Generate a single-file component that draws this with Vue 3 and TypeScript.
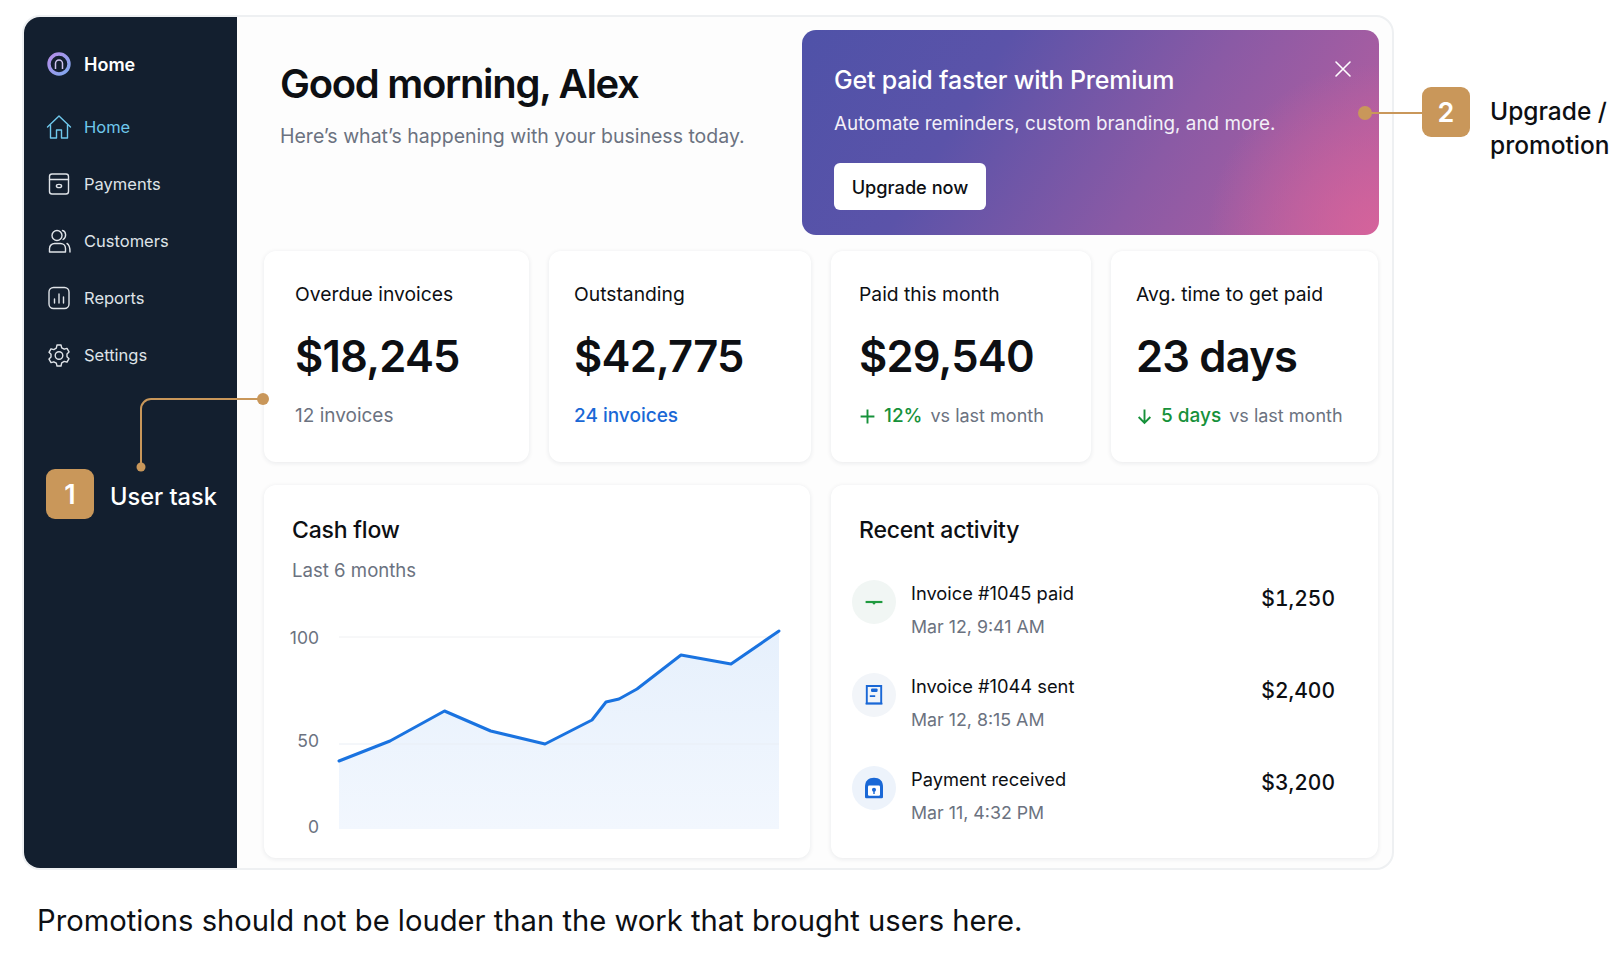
<script setup lang="ts">
const nav = [
  { label: 'Home', icon: 'home', active: true },
  { label: 'Payments', icon: 'payments' },
  { label: 'Customers', icon: 'customers' },
  { label: 'Reports', icon: 'reports' },
  { label: 'Settings', icon: 'settings' },
]

const stats = [
  { label: 'Overdue invoices', value: '$18,245', sub: '12 invoices', tone: 'muted' },
  { label: 'Outstanding', value: '$42,775', sub: '24 invoices', tone: 'link' },
  { label: 'Paid this month', value: '$29,540', delta: '12%', arrow: 'plus', sub: 'vs last month', tone: 'muted' },
  { label: 'Avg. time to get paid', value: '23 days', delta: '5 days', arrow: 'down', sub: 'vs last month', tone: 'muted' },
]

const activity = [
  { title: 'Invoice #1045 paid', date: 'Mar 12, 9:41 AM', amount: '$1,250', icon: 'paid' },
  { title: 'Invoice #1044 sent', date: 'Mar 12, 8:15 AM', amount: '$2,400', icon: 'sent' },
  { title: 'Payment received', date: 'Mar 11, 4:32 PM', amount: '$3,200', icon: 'received' },
]

const points: [number, number][] = [
  [58, 157], [109, 137], [163.5, 107], [209.7, 127], [264, 140], [311, 116],
  [325, 98], [338, 95], [356, 85], [400, 51], [450, 60], [498, 27],
]
const line = points.map((p) => p.join(',')).join(' ')
const area = `58,225 ${line} 498,225`
</script>

<template>
  <div class="page">
    <div class="frame">
      <aside class="sidebar">
        <div class="brand">
          <svg class="nav-icon" viewBox="0 0 26 26" fill="none">
            <defs>
              <linearGradient id="ring" x1="0" y1="0" x2="1" y2="1">
                <stop offset="0" stop-color="#b58de8" />
                <stop offset="1" stop-color="#7fa8ee" />
              </linearGradient>
            </defs>
            <circle cx="13" cy="13" r="10" stroke="url(#ring)" stroke-width="3.400" />
            <path d="M9.500 18v-5.500a3.500 3.500 0 0 1 7 0V18" stroke="#cfc4ee" stroke-width="1.500" />
          </svg>
          <span>Home</span>
        </div>
        <nav class="nav">
          <div v-for="item in nav" :key="item.label" class="nav-item" :class="{ active: item.active }">
            <svg class="nav-icon" viewBox="0 0 26 26" fill="none" stroke="currentColor" stroke-width="1.400" stroke-linejoin="round" stroke-linecap="round">
              <template v-if="item.icon === 'home'">
                <path d="M1.500 13 13 2l11.500 11" />
                <path d="M4.500 11v13h6v-8h5v8h6V11" />
              </template>
              <template v-else-if="item.icon === 'payments'">
                <rect x="3.500" y="3" width="19" height="20" rx="2.500" />
                <path d="M3.500 8.500h19" />
                <ellipse cx="13" cy="15" rx="2.600" ry="1.600" />
              </template>
              <template v-else-if="item.icon === 'customers'">
                <circle cx="11" cy="7.500" r="5" />
                <path d="M3.500 24v-3.500c0-3 2.500-5 5-5h6c2.600 0 5 2 5 5V24Z" />
                <path d="M16.500 2.500c3.500.8 4.500 6.500.6 9M21 15.500c2 1 3 3 3 8.500" />
              </template>
              <template v-else-if="item.icon === 'reports'">
                <rect x="3" y="2.500" width="20" height="21" rx="4.500" />
                <path d="M8.500 14v4M13 9v9M17.500 12v6" />
              </template>
              <template v-else>
                <path d="M11 3h4l.7 2.800 2.500 1.400 2.800-.8 2 3.500-2 2v2.800l2 2-2 3.500-2.800-.8-2.500 1.400L15 24h-4l-.7-2.800-2.500-1.400-2.800.8-2-3.500 2-2v-2.800l-2-2 2-3.500 2.800.8 2.500-1.400Z" />
                <circle cx="13" cy="13.500" r="3.800" />
              </template>
            </svg>
            <span>{{ item.label }}</span>
          </div>
        </nav>
        <div class="task">
          <span class="badge">1</span>
          <span class="task-label">User task</span>
        </div>
      </aside>

      <main class="main">
        <header class="hero">
          <div class="greeting">
            <h1>Good morning, Alex</h1>
            <p>Here’s what’s happening with your business today.</p>
          </div>
          <section class="promo">
            <h2>Get paid faster with Premium</h2>
            <p>Automate reminders, custom branding, and more.</p>
            <button class="upgrade">Upgrade now</button>
            <svg class="close" viewBox="0 0 18 18" fill="none" stroke="#fff" stroke-width="1.600" stroke-linecap="round">
              <path d="M2 2l14 14M16 2 2 16" />
            </svg>
            <span class="promo-dot"></span>
          </section>
        </header>

        <section class="stats">
          <article v-for="s in stats" :key="s.label" class="card stat">
            <div class="stat-label">{{ s.label }}</div>
            <div class="stat-value">{{ s.value }}</div>
            <div class="stat-sub">
              <template v-if="s.delta">
                <svg class="delta-icon" viewBox="0 0 16 16" fill="none" stroke="#16913a" stroke-width="1.800">
                  <path v-if="s.arrow === 'plus'" d="M8 1.500v13M1.500 8h13" />
                  <path v-else d="M8 1.500v12.500M2.500 8.500 8 14l5.500-5.500" />
                </svg>
                <span class="delta">{{ s.delta }}</span>
              </template>
              <span :class="s.tone">{{ s.sub }}</span>
            </div>
          </article>
        </section>

        <section class="lower">
          <article class="card chart">
            <h3>Cash flow</h3>
            <div class="chart-sub">Last 6 months</div>
            <svg class="plot" viewBox="0 0 510 240" width="510" height="240" fill="none">
              <defs>
                <linearGradient id="fill" x1="0" y1="0" x2="0" y2="1">
                  <stop offset="0" stop-color="#e6f0fc" />
                  <stop offset="1" stop-color="#f2f7fe" />
                </linearGradient>
              </defs>
              <path d="M58 33h440" stroke="#eff0f2" stroke-width="1" />
              <polygon :points="area" fill="url(#fill)" />
              <path d="M58 140h440" stroke="#e9eef5" stroke-width="1" />
              <polyline :points="line" stroke="#1a73e0" stroke-width="3" stroke-linejoin="round" stroke-linecap="round" />
              <text x="38" y="40" text-anchor="end">100</text>
              <text x="38" y="143" text-anchor="end">50</text>
              <text x="38" y="229" text-anchor="end">0</text>
            </svg>
          </article>

          <article class="card recent">
            <h3>Recent activity</h3>
            <ul class="rows">
              <li v-for="a in activity" :key="a.title" class="row">
                <span class="row-icon" :class="a.icon">
                  <svg viewBox="0 0 20 20" width="24" height="24" fill="none">
                    <template v-if="a.icon === 'paid'">
                      <path d="M3 10h14" stroke="#1f9a3f" stroke-width="1.800" />
                      <circle cx="10" cy="11" r="1" fill="#1f9a3f" />
                    </template>
                    <template v-else-if="a.icon === 'sent'">
                      <path d="M4 2.500h12v14.500H4Z" stroke="#1a68d6" stroke-width="1.600" />
                      <rect x="7.500" y="4.500" width="5.500" height="3" rx="1" fill="#1a68d6" />
                      <path d="M6.500 11h4.500M3 17.200h14" stroke="#1a68d6" stroke-width="1.400" />
                    </template>
                    <template v-else>
                      <path d="M2.500 9c0-5 3-7.500 7.500-7.500S17.500 4 17.500 9v8.500a1 1 0 0 1-1 1h-13a1 1 0 0 1-1-1Z" fill="#1a68d6" />
                      <rect x="5" y="8" width="10" height="8.500" rx="1" fill="#fff" />
                      <circle cx="10" cy="11.500" r="1.700" fill="#1a68d6" />
                      <path d="M10 12v3" stroke="#1a68d6" stroke-width="1.200" />
                    </template>
                  </svg>
                </span>
                <div class="row-text">
                  <div class="row-title">{{ a.title }}</div>
                  <div class="row-date">{{ a.date }}</div>
                </div>
                <div class="row-amount">{{ a.amount }}</div>
              </li>
            </ul>
          </article>
        </section>
      </main>

      <svg class="connector" width="140" height="85" viewBox="0 0 140 85" fill="none">
        <path d="M6 74V16a10 10 0 0 1 10-10h112" stroke="#c9975a" stroke-width="2" />
        <circle cx="6" cy="74" r="4.500" fill="#c9975a" />
        <circle cx="128" cy="6" r="6" fill="#c9975a" />
      </svg>
    </div>

    <div class="note">
      <span class="promo-line"></span>
      <span class="badge">2</span>
      <span class="note-label">Upgrade /<br />promotion</span>
    </div>

    <p class="caption">Promotions should not be louder than the work that brought users here.</p>
  </div>
</template>

<style>
html,
body {
  margin: 0;
  background: #fff;
}
</style>

<style scoped>
.page {
  position: relative;
  width: 1619px;
  height: 971px;
  padding: 15px 0 0 22px;
  box-sizing: border-box;
  overflow: hidden;
  font-family: Inter, "Liberation Sans", sans-serif;
  color: #0d0f13;
}

.frame {
  position: relative;
  display: flex;
  width: 1372px;
  height: 855px;
  box-sizing: border-box;
  border: 2px solid #eef0f2;
  border-radius: 18px;
  background: #fdfdfd;
  overflow: hidden;
}

.sidebar {
  display: flex;
  flex-direction: column;
  flex: 0 0 213px;
  padding: 29px 0 0 22px;
  box-sizing: border-box;
  background: #131f2f;
  color: #fff;
}

.brand {
  display: flex;
  align-items: center;
  gap: 12px;
  height: 36px;
  font-size: 18px;
  font-weight: 600;
}

.nav {
  display: flex;
  flex-direction: column;
  gap: 25px;
  margin-top: 29px;
}

.nav-item {
  display: flex;
  align-items: center;
  gap: 12px;
  height: 32px;
  font-size: 16.500px;
  color: #dfe3e8;
}

.nav-item.active {
  color: #6fc8ec;
}

.nav-icon {
  width: 26px;
  height: 26px;
  flex-shrink: 0;
}

.task {
  display: flex;
  align-items: center;
  gap: 16px;
  margin-top: 98px;
}

.badge {
  display: flex;
  align-items: center;
  justify-content: center;
  width: 48px;
  height: 50px;
  flex-shrink: 0;
  border-radius: 9px;
  background: #c9975a;
  color: #fff;
  font-size: 27px;
  font-weight: 600;
}

.task-label {
  padding-top: 4px;
  font-size: 23.600px;
  font-weight: 500;
  white-space: nowrap;
}

.main {
  flex: 1;
  min-width: 0;
  padding: 13px 13px 0 27px;
}

.hero {
  display: flex;
  justify-content: space-between;
  height: 205px;
}

.greeting {
  padding: 29px 0 0 16px;
}

h1 {
  margin: 0;
  font-size: 40px;
  line-height: 50px;
  font-weight: 600;
  letter-spacing: -1.300px;
}

.greeting p {
  margin: 15px 0 0;
  font-size: 19.500px;
  color: #6b7280;
}

.promo {
  position: relative;
  width: 577px;
  padding: 33px 0 0 32px;
  box-sizing: border-box;
  border-radius: 14px;
  background:
    radial-gradient(circle at 100% 100%, #d5639b 0, rgba(213, 99, 155, 0) 28%),
    linear-gradient(122deg, #4f52a8 0%, #5b53a9 30%, #8a5aa5 62%, #b95f9f 100%);
  color: #fff;
}

.promo h2 {
  margin: 0;
  font-size: 25px;
  line-height: 34px;
  font-weight: 500;
  letter-spacing: -0.2px;
}

.promo p {
  margin: 13px 0 0;
  font-size: 18.850px;
  line-height: 28px;
  color: #f3f0f8;
}

.upgrade {
  display: block;
  width: 152px;
  height: 47px;
  margin-top: 25px;
  border: 0;
  border-radius: 6px;
  background: #fff;
  color: #0d0f13;
  font: 500 18.200px Inter, "Liberation Sans", sans-serif;
}

.close {
  position: absolute;
  top: 30px;
  right: 27px;
  width: 18px;
  height: 18px;
}

.promo-dot {
  position: absolute;
  top: 76px;
  right: 7px;
  width: 14px;
  height: 14px;
  border-radius: 50%;
  background: #c9975a;
}

.card {
  border-radius: 12px;
  background: #fff;
  box-shadow: 0 1px 5px rgba(20, 30, 50, 0.09);
}

.stats {
  display: grid;
  grid-template-columns: 265px 262px 260px 267px;
  gap: 20px;
  margin-top: 16px;
}

.stat {
  height: 211px;
  padding: 30px 0 0 31px;
  box-sizing: border-box;
}

.stat:nth-child(2) {
  padding-left: 25px;
}

.stat:nth-child(3) {
  padding-left: 28px;
}

.stat:nth-child(4) {
  padding-left: 25px;
}

.stat-label {
  font-size: 19.300px;
  line-height: 26px;
}

.stat-value {
  margin-top: 21px;
  font-size: 43.500px;
  line-height: 56px;
  font-weight: 600;
  letter-spacing: -0.800px;
}

.stat-sub {
  display: flex;
  align-items: center;
  margin-top: 19px;
  font-size: 19px;
  line-height: 26px;
  white-space: nowrap;
}

.delta-icon {
  width: 17px;
  height: 17px;
  margin-right: 8px;
}

.delta {
  margin-right: 8px;
  color: #16913a;
  font-weight: 500;
}

.muted {
  color: #6b7280;
}

.stat-sub .delta + .muted {
  font-size: 18px;
}

.link {
  color: #1a68d6;
  font-weight: 500;
}

.lower {
  display: grid;
  grid-template-columns: 546px 547px;
  gap: 21px;
  margin-top: 23px;
}

.chart,
.recent {
  height: 373px;
  box-sizing: border-box;
  padding: 30px 0 0 28px;
}

h3 {
  margin: 0;
  font-size: 23px;
  line-height: 30px;
  font-weight: 500;
  letter-spacing: -0.2px;
}

.chart-sub {
  margin-top: 12px;
  font-size: 18.600px;
  line-height: 26px;
  color: #6b7280;
}

.plot {
  display: block;
  margin: 21px 0 0 -11px;
}

.plot text {
  font: 17.500px Inter, "Liberation Sans", sans-serif;
  fill: #6b7280;
}

.rows {
  display: flex;
  flex-direction: column;
  gap: 27px;
  margin: 35px 0 0 -7px;
  padding: 0 43px 0 0;
  list-style: none;
}

.row {
  display: flex;
  align-items: flex-start;
  height: 66px;
}

.row-icon {
  display: flex;
  align-items: center;
  justify-content: center;
  width: 44px;
  height: 44px;
  flex-shrink: 0;
  border-radius: 50%;
  background: #f1f6f4;
}

.row-icon.sent {
  background: #f2f5f9;
}

.row-icon.received {
  background: #edf3fb;
}

.row-text {
  flex: 1;
  margin-left: 15px;
}

.row-title {
  font-size: 18.300px;
  line-height: 26px;
}

.row-date {
  margin-top: 8px;
  font-size: 17.800px;
  line-height: 26px;
  color: #6b7280;
}

.row-amount {
  margin-top: 4px;
  font-size: 21px;
  line-height: 30px;
  font-weight: 500;
  font-variant-numeric: tabular-nums;
}

.row:nth-child(2) .row-amount {
  margin-top: 3px;
}

.row:nth-child(3) .row-amount {
  margin-top: 2px;
}

.connector {
  position: absolute;
  top: 376px;
  left: 111px;
}

.note {
  position: absolute;
  top: 87px;
  left: 1422px;
  display: flex;
  gap: 20px;
}

.promo-line {
  position: absolute;
  top: 25px;
  left: -57px;
  width: 57px;
  height: 2px;
  background: #c9975a;
}

.note-label {
  margin-top: 7px;
  font-size: 24.500px;
  line-height: 34px;
  font-weight: 500;
  white-space: nowrap;
}

.caption {
  margin: 31px 0 0 15px;
  font-size: 29.200px;
  line-height: 40px;
  white-space: nowrap;
}
</style>
